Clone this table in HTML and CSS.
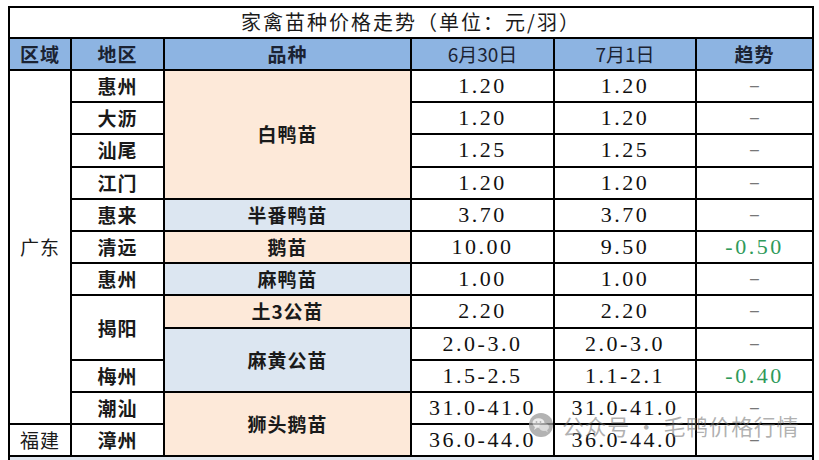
FILE: index.html
```html
<!DOCTYPE html>
<html lang="zh">
<head>
<meta charset="utf-8">
<link rel="stylesheet" href="styles.css">
</head>
<body>
<div class="wrap">
<table class="price">
  <colgroup>
    <col class="c1"><col class="c2"><col class="c3"><col class="c4"><col class="c5"><col class="c6">
  </colgroup>
  <tr class="title-row"><td colspan="6" class="title">家禽苗种价格走势（单位：元/羽）</td></tr>
  <tr class="head-row">
    <th>区域</th><th>地区</th><th>品种</th><th class="date">6月30日</th><th class="date">7月1日</th><th>趋势</th>
  </tr>
  <tr>
    <td rowspan="11" class="cn region">广东</td><td class="cn">惠州</td><td rowspan="4" class="cn peach">白鸭苗</td>
    <td class="num">1.20</td><td class="num">1.20</td><td class="dash">–</td>
  </tr>
  <tr><td class="cn">大沥</td><td class="num">1.20</td><td class="num">1.20</td><td class="dash">–</td></tr>
  <tr><td class="cn">汕尾</td><td class="num">1.25</td><td class="num">1.25</td><td class="dash">–</td></tr>
  <tr><td class="cn">江门</td><td class="num">1.20</td><td class="num">1.20</td><td class="dash">–</td></tr>
  <tr><td class="cn">惠来</td><td class="cn blue">半番鸭苗</td><td class="num">3.70</td><td class="num">3.70</td><td class="dash">–</td></tr>
  <tr><td class="cn">清远</td><td class="cn peach">鹅苗</td><td class="num">10.00</td><td class="num">9.50</td><td class="num down">-0.50</td></tr>
  <tr><td class="cn">惠州</td><td class="cn blue">麻鸭苗</td><td class="num">1.00</td><td class="num">1.00</td><td class="dash">–</td></tr>
  <tr><td rowspan="2" class="cn">揭阳</td><td class="cn peach">土3公苗</td><td class="num">2.20</td><td class="num">2.20</td><td class="dash">–</td></tr>
  <tr><td rowspan="2" class="cn blue">麻黄公苗</td><td class="num">2.0-3.0</td><td class="num">2.0-3.0</td><td class="dash">–</td></tr>
  <tr><td class="cn">梅州</td><td class="num">1.5-2.5</td><td class="num">1.1-2.1</td><td class="num down">-0.40</td></tr>
  <tr><td class="cn">潮汕</td><td rowspan="2" class="cn peach">狮头鹅苗</td><td class="num">31.0-41.0</td><td class="num">31.0-41.0</td><td class="dash">–</td></tr>
  <tr><td class="cn region">福建</td><td class="cn">漳州</td><td class="num">36.0-44.0</td><td class="num">36.0-44.0</td><td class="dash">–</td></tr>
  <tr class="foot-row"><td colspan="6"></td></tr>
</table>
<div class="watermark">
  <svg class="wm-icon" width="26" height="24" viewBox="0 0 26 24">
    <circle cx="13" cy="12" r="12" fill="#9a9a9a"/>
    <ellipse cx="10.5" cy="10" rx="6" ry="4.8" fill="#e6e6e6"/>
    <path d="M7 14 L6 17 L9.5 14.5 Z" fill="#e6e6e6"/>
    <ellipse cx="16" cy="14" rx="5" ry="4" fill="#cfcfcf"/>
    <path d="M19 17 L20 19.5 L17 17.6 Z" fill="#cfcfcf"/>
    <circle cx="8.5" cy="9" r="0.9" fill="#9a9a9a"/>
    <circle cx="12.5" cy="9" r="0.9" fill="#9a9a9a"/>
  </svg>
  <span class="wm-text">公众号 · 毛鸭价格行情</span>
</div>
</div>
</body>
</html>
```
FILE: styles.css
```css
html, body {
  margin: 0;
  padding: 0;
  background: #ffffff;
}
body {
  padding: 6px 0 0 8px;
  overflow: hidden;
  height: 460px;
  box-sizing: border-box;
}
.wrap {
  position: relative;
  width: 804px;
}
.price {
  border-collapse: collapse;
  table-layout: fixed;
  width: 804px;
  font-family: "Noto Sans CJK SC", sans-serif;
  color: #111;
}
.c1 { width: 62px; }
.c2 { width: 93px; }
.c3 { width: 247px; }
.c4 { width: 143px; }
.c5 { width: 142px; }
.c6 { width: 117px; }
.price td, .price th {
  border: 2.5px solid #000;
  padding: 0;
  text-align: center;
  vertical-align: middle;
  height: 30.2px;
  line-height: 24px;
}
.price .title-row td {
  height: 28.5px;
  font-size: 20px;
  letter-spacing: 2px;
  font-weight: 400;
  color: #1a1a1a;
}
.price .head-row th {
  height: 30.5px;
  background: #8db4e2;
  font-size: 19px;
  font-weight: 700;
  letter-spacing: 1px;
  color: #1b2333;
}
.price .head-row th.date {
  font-weight: 400;
  letter-spacing: 0;
  font-size: 19px;
}
.cn {
  font-size: 19px;
  font-weight: 700;
  letter-spacing: 1px;
  color: #1a1a1a;
}
.region {
  font-weight: 400;
  font-size: 19px;
}
.peach { background: #fde9d9; }
.blue { background: #dce6f1; }
.num {
  font-family: "Liberation Serif", serif;
  font-size: 22px;
  letter-spacing: 2.5px;
  color: #111;
}
.dash {
  color: #777;
  font-size: 16px;
  font-family: "Liberation Sans", sans-serif;
}
.down {
  color: #2f9a5a;
}
.price .foot-row td {
  height: 20px;
  background: #dfe6ef;
  border-bottom: none;
}
.watermark {
  position: absolute;
  left: 520px;
  top: 406px;
  display: flex;
  align-items: center;
  gap: 8px;
  pointer-events: none;
}
.wm-text {
  font-family: "Noto Sans CJK SC", sans-serif;
  font-size: 22px;
  color: rgba(110, 110, 110, 0.55);
  letter-spacing: 0.6px;
  line-height: 26px;
}
.wm-icon { opacity: 0.75; }
```
